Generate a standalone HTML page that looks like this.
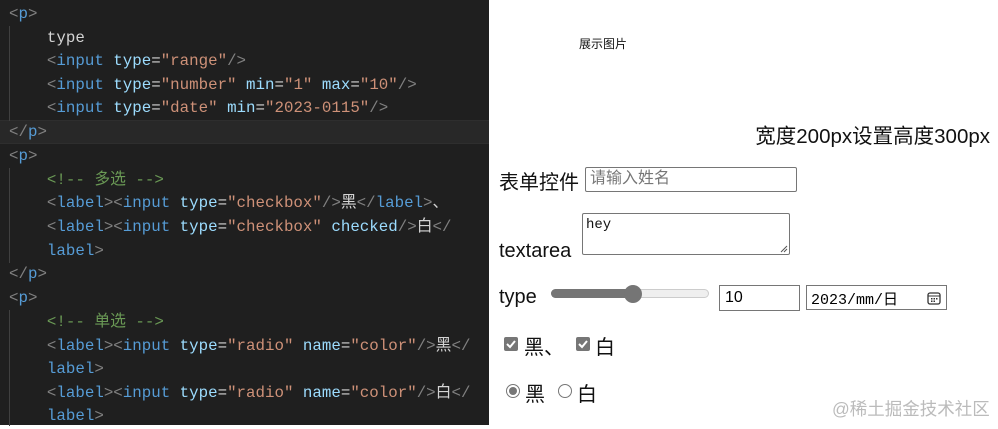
<!DOCTYPE html>
<html><head><meta charset="utf-8"><style>
*{margin:0;padding:0;box-sizing:border-box}
body{width:998px;height:425px;overflow:hidden;background:#fff;position:relative;font-family:"Liberation Sans","Noto Sans CJK SC",sans-serif}
#ed{position:absolute;left:0;top:0;width:489px;height:425px;background:#1f1f1f;font-family:"Liberation Mono","Noto Sans CJK SC",monospace;font-size:15.8px;color:#d4d4d4}
.l{position:absolute;left:9px;white-space:pre;height:23.7px;line-height:23.7px}
.g{color:#808080}.t{color:#569cd6}.a{color:#9cdcfe}.s{color:#ce9178}.c{color:#6a9955}
.hl{position:absolute;left:0;top:120px;width:489px;height:24px;background:#282828;border-top:1px solid #2e2e2e;border-bottom:1px solid #2e2e2e}
.guide{position:absolute;left:9px;width:1px;background:#404040}
.r{position:absolute;color:#111;white-space:nowrap}
.box{position:absolute;border:1px solid #767676;border-radius:2px;background:#fff}
</style></head><body>
<div id="ed">
<div class="hl"></div>
<div class="guide" style="top:26px;height:95px"></div>
<div class="guide" style="top:168px;height:95px"></div>
<div class="guide" style="top:310px;height:116px"></div>
<div style="position:absolute;left:0;top:2px;width:489px;height:425px">
<div class="l" style="top:1px"><span class="g">&lt;</span><span class="t">p</span><span class="g">&gt;</span></div>
<div class="l" style="top:25px">    type</div>
<div class="l" style="top:48px">    <span class="g">&lt;</span><span class="t">input</span> <span class="a">type</span>=<span class="s">"range"</span><span class="g">/&gt;</span></div>
<div class="l" style="top:72px">    <span class="g">&lt;</span><span class="t">input</span> <span class="a">type</span>=<span class="s">"number"</span> <span class="a">min</span>=<span class="s">"1"</span> <span class="a">max</span>=<span class="s">"10"</span><span class="g">/&gt;</span></div>
<div class="l" style="top:95px">    <span class="g">&lt;</span><span class="t">input</span> <span class="a">type</span>=<span class="s">"date"</span> <span class="a">min</span>=<span class="s">"2023-0115"</span><span class="g">/&gt;</span></div>
<div class="l" style="top:119px"><span class="g">&lt;/</span><span class="t">p</span><span class="g">&gt;</span></div>
<div class="l" style="top:143px"><span class="g">&lt;</span><span class="t">p</span><span class="g">&gt;</span></div>
<div class="l" style="top:167px">    <span class="c">&lt;!-- 多选 --&gt;</span></div>
<div class="l" style="top:190px">    <span class="g">&lt;</span><span class="t">label</span><span class="g">&gt;&lt;</span><span class="t">input</span> <span class="a">type</span>=<span class="s">"checkbox"</span><span class="g">/&gt;</span>黑<span class="g">&lt;/</span><span class="t">label</span><span class="g">&gt;</span>、</div>
<div class="l" style="top:214px">    <span class="g">&lt;</span><span class="t">label</span><span class="g">&gt;&lt;</span><span class="t">input</span> <span class="a">type</span>=<span class="s">"checkbox"</span> <span class="a">checked</span><span class="g">/&gt;</span>白<span class="g">&lt;/</span></div>
<div class="l" style="top:238px">    <span class="t">label</span><span class="g">&gt;</span></div>
<div class="l" style="top:261px"><span class="g">&lt;/</span><span class="t">p</span><span class="g">&gt;</span></div>
<div class="l" style="top:285px"><span class="g">&lt;</span><span class="t">p</span><span class="g">&gt;</span></div>
<div class="l" style="top:309px">    <span class="c">&lt;!-- 单选 --&gt;</span></div>
<div class="l" style="top:333px">    <span class="g">&lt;</span><span class="t">label</span><span class="g">&gt;&lt;</span><span class="t">input</span> <span class="a">type</span>=<span class="s">"radio"</span> <span class="a">name</span>=<span class="s">"color"</span><span class="g">/&gt;</span>黑<span class="g">&lt;/</span></div>
<div class="l" style="top:356px">    <span class="t">label</span><span class="g">&gt;</span></div>
<div class="l" style="top:380px">    <span class="g">&lt;</span><span class="t">label</span><span class="g">&gt;&lt;</span><span class="t">input</span> <span class="a">type</span>=<span class="s">"radio"</span> <span class="a">name</span>=<span class="s">"color"</span><span class="g">/&gt;</span>白<span class="g">&lt;/</span></div>
<div class="l" style="top:403px">    <span class="t">label</span><span class="g">&gt;</span></div>
</div>
</div>

<div class="r" style="left:579px;top:35px;font-size:12px">展示图片</div>
<div class="r" style="right:8px;top:119px;font-size:20.5px">宽度200px设置高度300px</div>
<div class="r" style="left:499px;top:166px;font-size:20px">表单控件</div>
<div class="box" style="left:585px;top:167px;width:212px;height:25px"><span style="position:absolute;left:4px;top:1px;font-size:16px;line-height:20px;color:#777">请输入姓名</span></div>
<div class="r" style="left:499px;top:240px;font-size:20px">textarea</div>
<div class="box" style="left:582px;top:213px;width:208px;height:42px"><span style="position:absolute;left:3px;top:3px;font-family:'Liberation Mono',monospace;font-size:14px;color:#111">hey</span>
<svg style="position:absolute;right:1px;bottom:1px" width="9" height="9"><path d="M8 2L2 8M8 5L5 8" stroke="#555" stroke-width="1"/></svg></div>
<div class="r" style="left:499px;top:286px;font-size:20px">type</div>
<div style="position:absolute;left:551px;top:289px;width:158px;height:9px;border-radius:5px;background:#efefef;border:1px solid #ccc"></div>
<div style="position:absolute;left:551px;top:289px;width:84px;height:9px;border-radius:5px;background:#757575"></div>
<div style="position:absolute;left:624px;top:285px;width:18px;height:18px;border-radius:50%;background:#757575"></div>
<div class="box" style="left:719px;top:285px;width:81px;height:26px;border-radius:0"><span style="position:absolute;left:5px;top:3px;font-size:16px">10</span></div>
<div class="box" style="left:806px;top:285px;width:141px;height:25px;border-radius:0"><span style="position:absolute;left:4px;top:2px;font-family:'Liberation Mono','Noto Sans CJK SC',monospace;font-size:15px">2023/mm/日</span>
<svg style="position:absolute;left:120px;top:5px" width="14" height="14"><rect x="1" y="2" width="12" height="11" rx="2" fill="none" stroke="#333" stroke-width="1.3"/><line x1="1" y1="5" x2="13" y2="5" stroke="#333"/><rect x="4" y="7" width="1.5" height="1.5" fill="#333"/><rect x="6.5" y="7" width="1.5" height="1.5" fill="#333"/><rect x="9" y="7" width="1.5" height="1.5" fill="#333"/><rect x="4" y="9.5" width="1.5" height="1.5" fill="#333"/><rect x="6.5" y="9.5" width="1.5" height="1.5" fill="#333"/></svg></div>
<div style="position:absolute;left:504px;top:337px;width:14px;height:14px;border-radius:2px;background:#767676"><svg width="14" height="14" style="display:block"><path d="M3 7L6 10L11 4" stroke="#fff" stroke-width="2" fill="none"/></svg></div>
<div class="r" style="left:524px;top:331px;font-size:20px">黑、</div>
<div style="position:absolute;left:576px;top:337px;width:14px;height:14px;border-radius:2px;background:#767676"><svg width="14" height="14" style="display:block"><path d="M3 7L6 10L11 4" stroke="#fff" stroke-width="2" fill="none"/></svg></div>
<div class="r" style="left:595px;top:331px;font-size:20px">白</div>
<div style="position:absolute;left:506px;top:384px;width:14px;height:14px;border-radius:50%;border:1px solid #767676;background:#fff"><div style="position:absolute;left:2px;top:2px;width:8px;height:8px;border-radius:50%;background:#767676"></div></div>
<div class="r" style="left:525px;top:378px;font-size:20px">黑</div>
<div style="position:absolute;left:558px;top:384px;width:14px;height:14px;border-radius:50%;border:1px solid #767676;background:#fff"></div>
<div class="r" style="left:577px;top:378px;font-size:20px">白</div>
<div class="r" style="left:832px;top:396px;font-size:17.5px;color:#bbb">@稀土掘金技术社区</div>
</body></html>
